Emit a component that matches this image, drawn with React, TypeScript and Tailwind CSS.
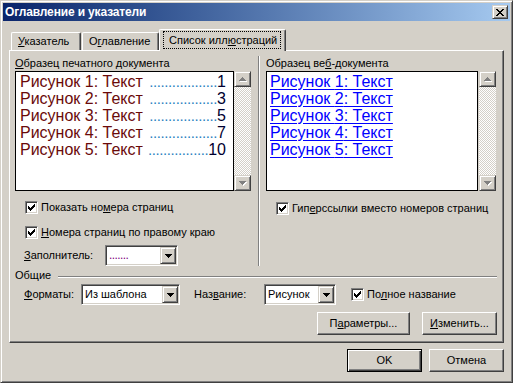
import type { ReactNode } from "react";

const raised =
  "border border-t-white border-l-white border-r-[#404040] border-b-[#404040] shadow-[inset_-1px_-1px_0_#808080]";
const sunken =
  "border border-t-[#808080] border-l-[#808080] border-r-white border-b-white shadow-[inset_1px_1px_0_#404040,inset_-1px_-1px_0_#d4d0c8]";
const bevel =
  "border border-t-[#d4d0c8] border-l-[#d4d0c8] border-r-[#404040] border-b-[#404040] shadow-[inset_1px_1px_0_#fff,inset_-1px_-1px_0_#808080]";

function Check() {
  return (
    <span className={`flex w-[13px] h-[13px] shrink-0 bg-white ${sunken}`}>
      <svg width="11" height="11" viewBox="0 0 11 11" shapeRendering="crispEdges">
        <path
          d="M2 4h1v3h-1z M3 5h1v3h-1z M4 6h1v3h-1z M5 5h1v3h-1z M6 4h1v3h-1z M7 3h1v3h-1z M8 2h1v3h-1z"
          fill="#000"
        />
      </svg>
    </span>
  );
}

function DropButton() {
  return (
    <span className={`flex items-center justify-center w-[16px] h-[17px] bg-[#d4d0c8] ${bevel}`}>
      <svg width="7" height="4" viewBox="0 0 7 4" shapeRendering="crispEdges">
        <path d="M0 0h7v1h-7z M1 1h5v1h-5z M2 2h3v1h-3z M3 3h1v1h-1z" fill="#000" />
      </svg>
    </span>
  );
}

function Combo({ className, children }: { className: string; children: ReactNode }) {
  return (
    <div className={`flex h-[21px] p-[1px] bg-white ${sunken} ${className}`}>
      <div className="flex-1 flex items-center pl-[2px] whitespace-nowrap overflow-hidden">{children}</div>
      <DropButton />
    </div>
  );
}

function ScrollArrow({ up }: { up?: boolean }) {
  const d = up
    ? "M3 0h1v1h-1z M2 1h3v1h-3z M1 2h5v1h-5z M0 3h7v1h-7z"
    : "M0 0h7v1h-7z M1 1h5v1h-5z M2 2h3v1h-3z M3 3h1v1h-1z";
  return (
    <span className={`flex items-center justify-center w-[17px] h-[16px] bg-[#d4d0c8] ${bevel}`}>
      <svg width="8" height="5" viewBox="0 0 8 5" shapeRendering="crispEdges">
        <path d={d} fill="#fff" transform="translate(1 1)" />
        <path d={d} fill="#808080" />
      </svg>
    </span>
  );
}

function ScrollBar() {
  return (
    <div className="flex flex-col w-[17px] h-[120px] shrink-0">
      <ScrollArrow up />
      <div className="flex-1 bg-[repeating-conic-gradient(#ffffff_0%_25%,#d4d0c8_0%_50%)] bg-[length:2px_2px]" />
      <ScrollArrow />
    </div>
  );
}

function Button({ children, className, isDefault }: { children: ReactNode; className: string; isDefault?: boolean }) {
  const frame = isDefault
    ? "border border-black shadow-[inset_1px_1px_0_#fff,inset_-1px_-1px_0_#404040,inset_-2px_-2px_0_#808080]"
    : raised;
  return (
    <div className={`flex items-center justify-center h-[23px] ${frame} ${className}`}>{children}</div>
  );
}

// page number and leader dots for each figure
const entries = [
  { page: 1, dots: 18 },
  { page: 3, dots: 18 },
  { page: 5, dots: 18 },
  { page: 7, dots: 18 },
  { page: 10, dots: 16 },
];

export default function App() {
  return (
    <div className="w-[513px] h-[383px] bg-[#d4d0c8] border border-t-[#d4d0c8] border-l-[#d4d0c8] border-r-[#404040] border-b-[#404040] shadow-[inset_1px_1px_0_#fff,inset_-1px_-1px_0_#808080] p-[2px] flex flex-col text-[11px] leading-[13px] text-black font-['Liberation_Sans',Arial,sans-serif]">
      {/* title bar */}
      <div className="flex items-center h-[18px] pl-[2px] pr-[2px] bg-linear-to-r from-[#0a246a] to-[#a6caf0]">
        <span className="flex-1 text-white font-bold text-[12px] tracking-[-0.15px]">Оглавление и указатели</span>
        <span className={`flex items-center justify-center w-[16px] h-[14px] bg-[#d4d0c8] ${bevel}`}>
          <svg width="8" height="7" viewBox="0 0 8 7" shapeRendering="crispEdges">
            <path
              d="M0 0h2v1h-2z M6 0h2v1h-2z M1 1h2v1h-2z M5 1h2v1h-2z M2 2h4v1h-4z M3 3h2v1h-2z M2 4h4v1h-4z M1 5h2v1h-2z M5 5h2v1h-2z M0 6h2v1h-2z M6 6h2v1h-2z"
              fill="#000"
            />
          </svg>
        </span>
      </div>

      {/* tabs */}
      <div className="flex items-end h-[21px] mt-[8px] pl-[8px]">
        <div className="flex items-center w-[70px] h-[18px] pl-[6px] border-l border-t border-l-white border-t-white border-r border-r-[#404040] shadow-[inset_-1px_0_0_#808080] rounded-tl-[2px] rounded-tr-[2px]">
          <span>
            <u>У</u>казатель
          </span>
        </div>
        <div className="flex items-center w-[77px] h-[18px] ml-[1px] pl-[6px] border-l border-t border-l-white border-t-white border-r border-r-[#404040] shadow-[inset_-1px_0_0_#808080] rounded-tl-[2px] rounded-tr-[2px]">
          <span>
            О<u>г</u>лавление
          </span>
        </div>
        <div className="relative z-10 flex w-[127px] h-[22px] -mb-[1px] pt-[1px] pl-[3px] pr-[4px] pb-[2px] bg-[#d4d0c8] border-l border-t border-l-white border-t-white border-r border-r-[#404040] shadow-[inset_-1px_0_0_#808080] rounded-tl-[2px] rounded-tr-[2px]">
          <span className="flex-1 flex items-center pl-[5px] border border-dotted border-black">
            Список илл<u>ю</u>страций
          </span>
        </div>
      </div>

      {/* panel */}
      <div className={`flex flex-col h-[293px] mx-[6px] pt-[6px] ${raised}`}>
        <div className="flex">
          {/* print preview */}
          <div className="flex flex-col pl-[5px]">
            <span>
              <u>О</u>бразец печатного документа
            </span>
            <div className="flex mt-[1px]">
              <div className="w-[219px] h-[120px] border border-black bg-white pt-[1px] pl-[4px] pr-[7px] text-[16px] leading-[17px]">
                {entries.map((e, i) => (
                  <div key={e.page} className="flex whitespace-nowrap">
                    <span className="text-[#6a0a0a]">Рисунок {i + 1}: Текст</span>
                    <span className="ml-auto text-[15px] text-[#2a7fbf] tracking-[-0.4px]">
                      {".".repeat(e.dots)}
                    </span>
                    <span className="text-[#000030]">{e.page}</span>
                  </div>
                ))}
              </div>
              <ScrollBar />
            </div>
            <div className="flex items-center gap-[3px] mt-[10px] ml-[10px]">
              <Check />
              <span>
                Показать но<u>м</u>ера страниц
              </span>
            </div>
            <div className="flex items-center gap-[3px] mt-[12px] ml-[10px]">
              <Check />
              <span>
                <u>Н</u>омера страниц по правому краю
              </span>
            </div>
            <div className="flex items-center mt-[6px] ml-[9px]">
              <span className="w-[81px]">
                <u>З</u>аполнитель:
              </span>
              <Combo className="w-[73px]">
                <span className="text-[#800080] text-[12px] tracking-[-0.6px]">.......</span>
              </Combo>
            </div>
          </div>

          {/* separator */}
          <div className="w-[2px] ml-[7px] mt-[-1px] border-l border-l-[#808080] border-r border-r-white" />

          {/* web preview */}
          <div className="flex flex-col ml-[6px]">
            <span>
              Образец ве<u>б</u>-документа
            </span>
            <div className="flex mt-[1px]">
              <div className="w-[212px] h-[120px] border border-black bg-white pt-[1px] pl-[3px] text-[16px] leading-[17px] text-[#0000ff]">
                {entries.map((e, i) => (
                  <div key={e.page} className="whitespace-nowrap">
                    <span className="underline underline-offset-[2px]">Рисунок {i + 1}: Текст</span>
                  </div>
                ))}
              </div>
              <div className="ml-[1px]">
                <ScrollBar />
              </div>
            </div>
            <div className="flex items-center gap-[3px] mt-[11px] ml-[10px]">
              <Check />
              <span>
                Гип<u>е</u>рссылки вместо номеров страниц
              </span>
            </div>
          </div>
        </div>

        {/* group: Общие */}
        <div className="flex items-center mt-[3px] pl-[5px] pr-[6px]">
          <span>Общие</span>
          <div className="flex-1 h-[2px] ml-[7px] mt-[2px] border-t border-t-[#808080] border-b border-b-white" />
        </div>

        <div className="flex items-center mt-[2px] pl-[14px]">
          <span className="w-[57px]">
            <u>Ф</u>орматы:
          </span>
          <Combo className="w-[99px]">Из шаблона</Combo>
          <span className="w-[70px] ml-[14px]">
            Наз<u>в</u>ание:
          </span>
          <Combo className="w-[72px]">Рисунок</Combo>
          <div className="flex items-center gap-[3px] ml-[15px]">
            <Check />
            <span>
              По<u>л</u>ное название
            </span>
          </div>
        </div>

        <div className="flex justify-end gap-[12px] mt-[7px] pr-[6px]">
          <Button className="w-[93px]">
            <span>
              П<u>а</u>раметры...
            </span>
          </Button>
          <Button className="w-[75px]">
            <span>
              <u>И</u>зменить...
            </span>
          </Button>
        </div>
      </div>

      {/* dialog buttons */}
      <div className="flex justify-end gap-[7px] mt-[6px] pr-[6px]">
        <Button className="w-[75px]" isDefault>
          OK
        </Button>
        <Button className="w-[75px]">Отмена</Button>
      </div>
    </div>
  );
}
